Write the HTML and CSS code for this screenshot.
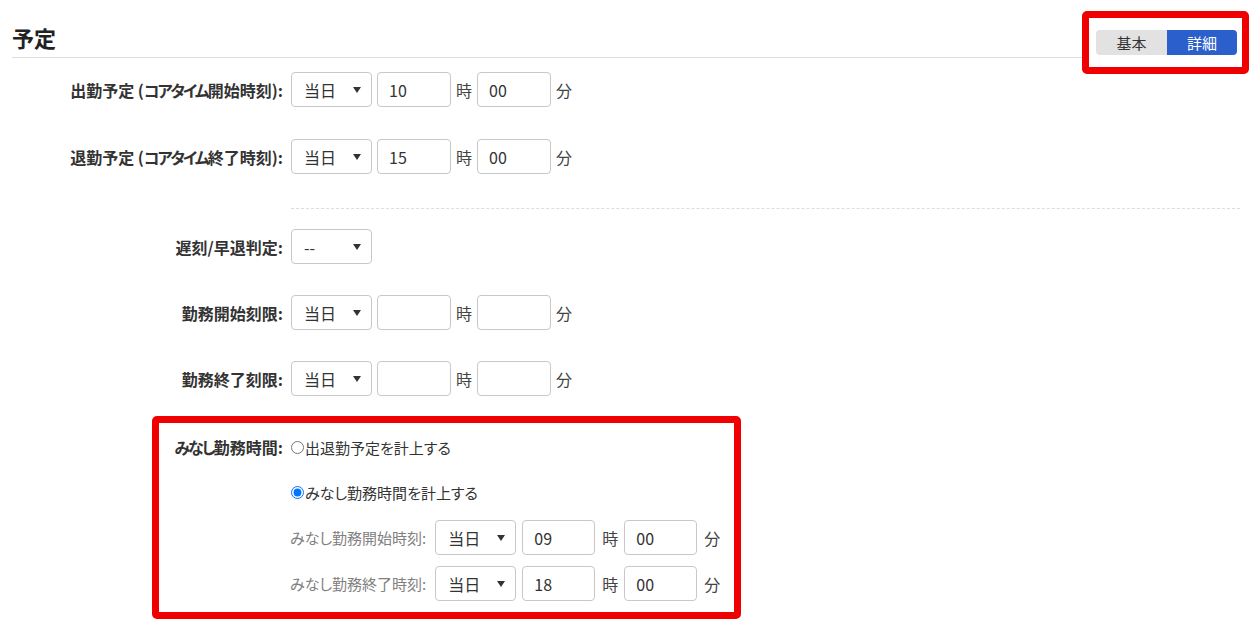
FILE: index.html
```html
<!DOCTYPE html>
<html lang="ja">
<head>
    <meta charset="UTF-8">
    <meta name="viewport" content="width=device-width, initial-scale=1.0">
    <title>予定</title>
    <link rel="stylesheet" href="styles.css">
</head>
<body>
    <div class="page">
        <div class="section-head">
            <h2>予定</h2>
            <div class="mark mode-mark">
                <div class="mode-switch">
                    <button class="mode-btn">基本</button>
                    <button class="mode-btn active">詳細</button>
                </div>
            </div>
        </div>

        <div class="form">
            <div class="row row-first">
                <label class="row-label">出勤予定 (<span class="kana">コアタイム</span>開始時刻):</label>
                <div class="controls">
                    <span class="select"><select><option>当日</option></select></span>
                    <input class="num" type="text" value="10">
                    <span class="unit">時</span>
                    <input class="num" type="text" value="00">
                    <span class="unit">分</span>
                </div>
            </div>
            <div class="row row-second">
                <label class="row-label">退勤予定 (<span class="kana">コアタイム</span>終了時刻):</label>
                <div class="controls">
                    <span class="select"><select><option>当日</option></select></span>
                    <input class="num" type="text" value="15">
                    <span class="unit">時</span>
                    <input class="num" type="text" value="00">
                    <span class="unit">分</span>
                </div>
            </div>

            <div class="divider"></div>

            <div class="row row-after-divider">
                <label class="row-label">遅刻/早退判定:</label>
                <div class="controls">
                    <span class="select"><select><option>--</option></select></span>
                </div>
            </div>
            <div class="row">
                <label class="row-label">勤務開始刻限:</label>
                <div class="controls">
                    <span class="select"><select><option>当日</option></select></span>
                    <input class="num" type="text" value="">
                    <span class="unit">時</span>
                    <input class="num" type="text" value="">
                    <span class="unit">分</span>
                </div>
            </div>
            <div class="row">
                <label class="row-label">勤務終了刻限:</label>
                <div class="controls">
                    <span class="select"><select><option>当日</option></select></span>
                    <input class="num" type="text" value="">
                    <span class="unit">時</span>
                    <input class="num" type="text" value="">
                    <span class="unit">分</span>
                </div>
            </div>

            <div class="mark deemed">
                <div class="deemed-row">
                    <label class="deemed-label"><span class="kana">みなし</span>勤務時間:</label>
                    <label class="radio"><input type="radio" name="deemed">出退勤予定を計上する</label>
                </div>
                <div class="deemed-row deemed-second">
                    <label class="radio"><input type="radio" name="deemed" checked>みなし勤務時間を計上する</label>
                </div>
                <div class="sub-row sub-first">
                    <span class="sub-label">みなし勤務開始時刻:</span>
                    <span class="select"><select><option>当日</option></select></span>
                    <input class="num" type="text" value="09">
                    <span class="unit">時</span>
                    <input class="num" type="text" value="00">
                    <span class="unit">分</span>
                </div>
                <div class="sub-row">
                    <span class="sub-label">みなし勤務終了時刻:</span>
                    <span class="select"><select><option>当日</option></select></span>
                    <input class="num" type="text" value="18">
                    <span class="unit">時</span>
                    <input class="num" type="text" value="00">
                    <span class="unit">分</span>
                </div>
            </div>
        </div>
    </div>
</body>
</html>
```

FILE: styles.css
```css
* {
    box-sizing: border-box;
}
body {
    margin: 0;
    background: #fff;
    color: #333;
    font-family: "Noto Sans CJK JP", "Noto Sans", sans-serif;
    font-size: 15px;
    font-feature-settings: "palt";
}
.page {
    padding: 0 20px 0 12px;
}

/* heading */
.section-head {
    position: relative;
    padding-top: 22px;
    padding-bottom: 4px;
    border-bottom: 1px solid #ddd;
}
.section-head h2 {
    margin: 0;
    font-size: 22px;
    line-height: 31px;
    font-weight: bold;
    color: #222;
}
.mark {
    border: 7px solid #f00000;
    border-radius: 5px;
    background: #fff;
}
.mode-mark {
    position: absolute;
    top: 11px;
    right: -9px;
    padding: 12px 5px 12px 7px;
}
.mode-switch {
    display: flex;
    border-radius: 4px;
    overflow: hidden;
}
.mode-btn {
    width: 71px;
    height: 25px;
    border: none;
    background: #e2e2e2;
    color: #333;
    font-family: inherit;
    font-size: 15px;
    padding: 0;
}
.mode-btn.active {
    width: 70px;
    background: #2b5fcc;
    color: #fff;
}

/* rows */
.form {
    display: flex;
    flex-direction: column;
}
.row {
    display: flex;
    align-items: center;
    margin-top: 31px;
}
.row-first {
    margin-top: 14px;
}
.row-second {
    margin-top: 32px;
}
.row-after-divider {
    margin-top: 20px;
}
.row-label {
    width: 279px;
    padding-right: 8px;
    text-align: right;
    font-size: 16px;
    font-weight: bold;
    color: #333;
}
.kana {
    letter-spacing: -2px;
}
.controls {
    display: flex;
    align-items: center;
    gap: 5px;
}
.divider {
    margin: 34px 0 0 279px;
    border-top: 1px dashed #ddd;
}

.select {
    position: relative;
    display: inline-block;
}
.select select {
    appearance: none;
    width: 81px;
    height: 35px;
    padding: 0 12px;
    border: 1px solid #c8c8c8;
    border-radius: 4px;
    background: #fff;
    color: #333;
    font-family: inherit;
    font-size: 16px;
}
.select::after {
    content: "";
    position: absolute;
    right: 11px;
    top: 15px;
    border-left: 4px solid transparent;
    border-right: 4px solid transparent;
    border-top: 6px solid #333;
}
.num {
    width: 74px;
    height: 35px;
    padding: 0 11px;
    border: 1px solid #c8c8c8;
    border-radius: 4px;
    color: #333;
    font-family: inherit;
    font-size: 16px;
}
.unit {
    font-size: 16px;
    color: #444;
}

/* deemed working hours */
.deemed {
    margin: 20px 0 0 140px;
    width: 589px;
    padding-bottom: 11px;
}
.deemed-row {
    display: flex;
    align-items: center;
    height: 24px;
    margin-top: 12px;
}
.deemed-second {
    margin-top: 21px;
    padding-left: 132px;
}
.deemed-label {
    width: 132px;
    padding-right: 8px;
    text-align: right;
    font-size: 16px;
    font-weight: bold;
}
.radio {
    display: flex;
    align-items: center;
    color: #333;
}
.radio input {
    margin: 0 1px 0 0;
    width: 13px;
    height: 13px;
}
.sub-row {
    display: flex;
    align-items: center;
    gap: 5px;
    padding-left: 131px;
    margin-top: 11px;
}
.sub-first {
    margin-top: 16px;
}
.sub-label {
    margin-right: 4px;
    color: #808080;
}
.sub-row .num {
    margin-left: 1px;
    width: 73px;
}
.sub-row .unit {
    margin-left: 2px;
}
```
